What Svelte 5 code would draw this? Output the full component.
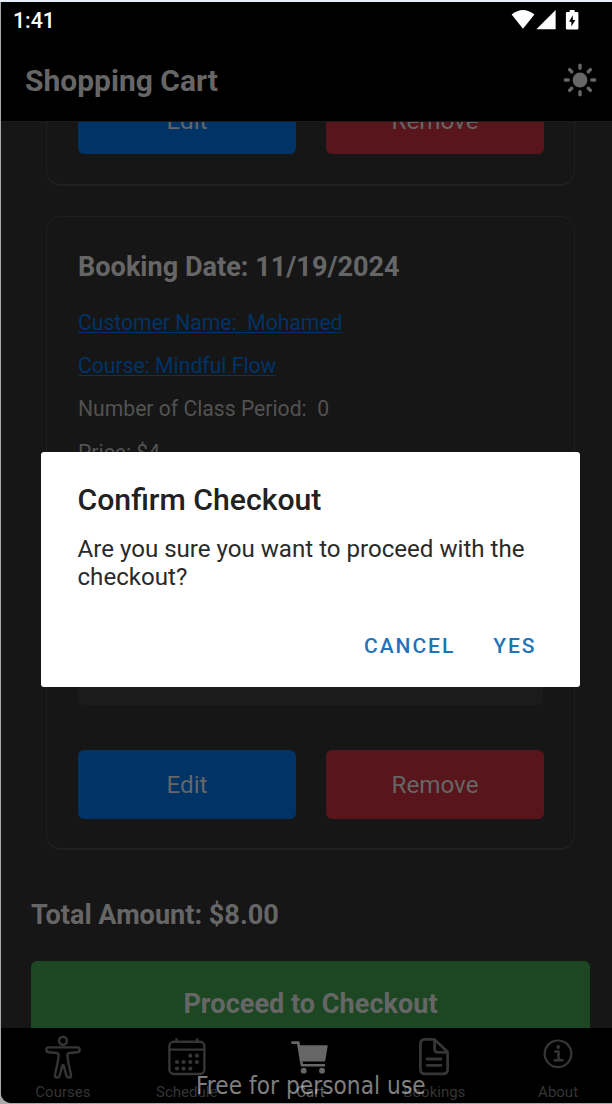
<script>
  const rows = [
    { text: 'Customer Name:\u00a0 Mohamed', link: true },
    { text: 'Course: Mindful Flow', link: true },
    { text: 'Number of Class Period:\u00a0 0', link: false },
    { text: 'Price: $4', link: false }
  ];
</script>

<div class="window">
  <div class="screen">
    <div class="status">
      <span class="clock">1:41</span>
      <svg class="signals" width="68" height="22" viewBox="0 0 68 22" fill="#fff">
        <path d="M0.6 4.6Q12 -4.4 23.4 4.6L12 18.8Z" />
        <path d="M25.4 19.3L44.6 0V19.3Z" />
        <path fill-rule="evenodd" d="M58.7 0H63.6V2H66.2Q67.4 2 67.4 3.2V18.3Q67.4 19.5 66.2 19.5H56.1Q54.9 19.5 54.9 18.3V3.2Q54.9 2 56.1 2H58.7ZM61.8 5.2L58 11.7H60.4V16.4L64.3 9.9H61.8Z" />
      </svg>
    </div>
    <header>
      <h1>Shopping Cart</h1>
      <svg class="sun" width="34" height="34" viewBox="0 0 34 34">
        <circle cx="17" cy="17" r="7.4" fill="#666" />
        <g stroke="#666" stroke-width="3.4" stroke-linecap="round">
          <path d="M17 2.3V5.2M17 28.8V31.7M2.3 17H5.2M28.8 17H31.7M6.6 6.6L8.7 8.7M25.3 25.3L27.4 27.4M6.6 27.4L8.7 25.3M25.3 8.7L27.4 6.6" />
        </g>
      </svg>
    </header>

    <main>
      <section class="card first">
        <div class="actions">
          <button class="edit">Edit</button>
          <button class="remove">Remove</button>
        </div>
      </section>
      <section class="card second">
        <h2>Booking Date: 11/19/2024</h2>
        {#each rows as row}
          <p><span class:link={row.link}>{row.text}</span></p>
        {/each}
        <div class="field"></div>
        <div class="actions">
          <button class="edit">Edit</button>
          <button class="remove">Remove</button>
        </div>
      </section>
      <div class="total"><span>Total Amount: $8.00</span></div>
      <button class="proceed">Proceed to Checkout</button>
    </main>

    <nav>
      <div class="tab">
        <svg width="44" height="46" viewBox="0 0 44 46" fill="none" stroke="#353535" stroke-width="2.4" stroke-linejoin="round">
          <circle cx="22" cy="5.8" r="4" />
          <path d="M7.5 12.4H36.5C39.4 12.4 39.4 17 36.5 17.2L28.2 18C26.7 18.2 26.3 19 26.5 20.8C26.8 27 28.5 33 30 39.4C30.6 43 26.4 43.8 25.4 40.7L22.8 31Q22 29 21.2 31L18.6 40.7C17.6 43.8 13.4 43 14 39.4C15.5 33 17.2 27 17.5 20.8C17.7 19 17.3 18.2 15.8 18L7.5 17.2C4.6 17 4.6 12.4 7.5 12.4Z" />
        </svg>
        <span>Courses</span>
      </div>
      <div class="tab">
        <svg width="44" height="46" viewBox="0 0 44 46" fill="none" stroke="#353535" stroke-width="2.4">
          <rect x="4.4" y="6.7" width="35" height="32.3" rx="4.5" />
          <path d="M4.4 14.6H39.4M11.5 3.2V6.5M32.2 3.2V6.5" />
          <g fill="#353535" stroke="none">
            <circle cx="25.3" cy="20.7" r="2.1" /><circle cx="31.9" cy="20.7" r="2.1" />
            <circle cx="12" cy="27" r="2.1" /><circle cx="18.6" cy="27" r="2.1" /><circle cx="25.3" cy="27" r="2.1" /><circle cx="31.9" cy="27" r="2.1" />
            <circle cx="12" cy="33.6" r="2.1" /><circle cx="18.6" cy="33.6" r="2.1" /><circle cx="25.3" cy="33.6" r="2.1" />
          </g>
        </svg>
        <span>Schedule</span>
      </div>
      <div class="tab active">
        <svg width="44" height="46" viewBox="0 0 44 46" fill="#666">
          <path d="M4.3 6.3H11.2L12.2 10.2H38.9Q39.8 10.2 39.7 11.2L37.3 25.4Q37 26.5 35.9 26.5H14.5L14.9 29.1H36.2Q37.3 29.1 37.3 30.3T36.2 31.6H13.8Q12.8 31.6 12.6 30.6L9 8.9H4.3Q3.1 8.9 3.1 7.6T4.3 6.3Z" />
          <circle cx="15.7" cy="35.7" r="2.9" /><circle cx="34" cy="35.7" r="2.9" />
        </svg>
        <span>Cart</span>
      </div>
      <div class="tab">
        <svg width="44" height="46" viewBox="0 0 44 46" fill="none" stroke="#353535" stroke-width="2.8" stroke-linecap="round" stroke-linejoin="round">
          <path d="M35.6 17.5V34.2Q35.6 38.8 31 38.8H13Q8.4 38.8 8.4 34.2V9Q8.4 4.4 13 4.4H21.2Q22.6 4.4 23.6 5.4L34.4 15.8Q35.6 16.7 35.6 17.5Z" />
          <path d="M22.6 5V14.2Q22.6 17.4 25.8 17.4H35M15 24H29M15 30.3H29" />
        </svg>
        <span>Bookings</span>
      </div>
      <div class="tab">
        <svg width="44" height="46" viewBox="0 0 44 46" fill="none" stroke="#353535" stroke-width="2.2" stroke-linecap="round" stroke-linejoin="round">
          <circle cx="22" cy="18.8" r="13.3" />
          <path d="M19.3 16.4H22.5V25.1M18.6 25.3H26.4" stroke-width="2.5" />
          <circle cx="22.2" cy="12" r="1.9" fill="#353535" stroke="none" />
        </svg>
        <span>About</span>
      </div>
    </nav>

    <div class="dialog">
      <h3>Confirm Checkout</h3>
      <div class="message">Are you sure you want to proceed with the<br />checkout?</div>
      <div class="buttons"><span>CANCEL</span><span>YES</span></div>
    </div>
    <div class="watermark">Free for personal use</div>
  </div>
</div>

<style>
  :global(body) { margin: 0; background: #a9a9a9; }
  .window {
    box-sizing: border-box;
    width: 612px;
    height: 1104px;
    padding: 2px 0 1px 1px;
    background: linear-gradient(#e8eff6 2px, #a9a9a9 2px);
    overflow: hidden;
    font-family: Roboto, sans-serif;
  }
  .screen {
    position: relative;
    height: 1101px;
    display: flex;
    flex-direction: column;
    background: #000;
    border-bottom-left-radius: 10px;
    overflow: hidden;
  }
  .status {
    height: 38px;
    flex: none;
    display: flex;
    justify-content: space-between;
    padding: 0 33px 0 12px;
    color: #fff;
  }
  .clock { font-size: 21.3px; font-weight: 500; line-height: 37px; }
  .signals { margin-top: 8px; }
  header {
    height: 81px;
    flex: none;
    box-sizing: border-box;
    display: flex;
    justify-content: space-between;
    align-items: flex-start;
    padding: 22px 15.5px 0 24px;
    color: #666;
  }
  .sun { margin-top: 0.5px; }
  h1, h2, h3, p { margin: 0; white-space: nowrap; }
  h1 { font-size: 30px; line-height: 38px; font-weight: 700; }
  main {
    flex: none;
    height: 907px;
    box-sizing: border-box;
    overflow: hidden;
    padding: 0 22px 0 30px;
    border-top: 1px solid #1b1b1b;
    background: #161616;
    color: #666;
  }
  button { border: 0; padding: 2px 0 0; font-family: inherit; color: #666; }
  .card {
    box-sizing: border-box;
    margin: 0 15px 30px;
    border: 1px solid #202020;
    border-bottom-width: 2px;
    border-radius: 15px;
    padding: 30px 30px 30px 31px;
  }
  .first { margin-top: -68px; height: 132px; }
  .second { height: 634px; }
  .actions { display: flex; gap: 30px; }
  .actions button { flex: 1; height: 69px; border-radius: 6px; font-size: 24.2px; }
  .actions .edit { background: #003366; }
  .actions .remove { background: #58151c; }
  h2 { font-size: 27.1px; line-height: 40px; font-weight: 700; margin-bottom: 14px; }
  p { height: 43.2px; line-height: 43.2px; font-size: 21.15px; color: #525252; }
  p .link { color: #003366; text-decoration: underline; text-decoration-thickness: 1px; text-underline-offset: 2px; }
  .field { height: 69px; margin: 162px 1px 45px 0; border-radius: 6px; background: #1b1b1b; }
  .total { font-size: 27.1px; line-height: 36px; font-weight: 700; margin-top: 47px; }
  .proceed {
    display: block;
    width: 100%;
    height: 84px;
    margin-top: 28px;
    border-radius: 6px;
    background: #1d4722;
    font-size: 27.1px;
    font-weight: 700;
  }
  nav { flex: none; height: 75px; display: flex; background: #000; }
  .tab { width: 123.8px; flex: none; display: flex; flex-direction: column; align-items: center; color: #353535; font-size: 15px; padding-top: 7px; box-sizing: border-box; }
  .tab.active { color: #666; }
  .tab svg { flex: none; }
  .tab span { line-height: 23px; }
  .dialog {
    position: absolute;
    left: 40px;
    top: 450px;
    width: 539px;
    height: 235px;
    box-sizing: border-box;
    padding: 29px 43.5px 0 36.5px;
    border-radius: 3px;
    background: #fff;
    color: #212121;
    white-space: nowrap;
  }
  h3 { font-size: 30.2px; font-weight: 500; line-height: 38px; }
  .message { font-size: 24.1px; line-height: 28px; margin-top: 16px; color: #2a2a2a; }
  .buttons { display: flex; justify-content: flex-end; gap: 38px; margin-top: 41px; font-size: 21px; line-height: 28px; font-weight: 500; letter-spacing: 1.95px; color: #1f73b7; }
  .watermark {
    position: absolute;
    left: 195px;
    top: 1068px;
    font-family: "DejaVu Sans Condensed", "DejaVu Sans", sans-serif;
    font-stretch: condensed;
    font-size: 24.1px;
    letter-spacing: 0.07px;
    line-height: 32px;
    color: rgba(255, 255, 255, 0.5);
    white-space: nowrap;
  }
</style>
